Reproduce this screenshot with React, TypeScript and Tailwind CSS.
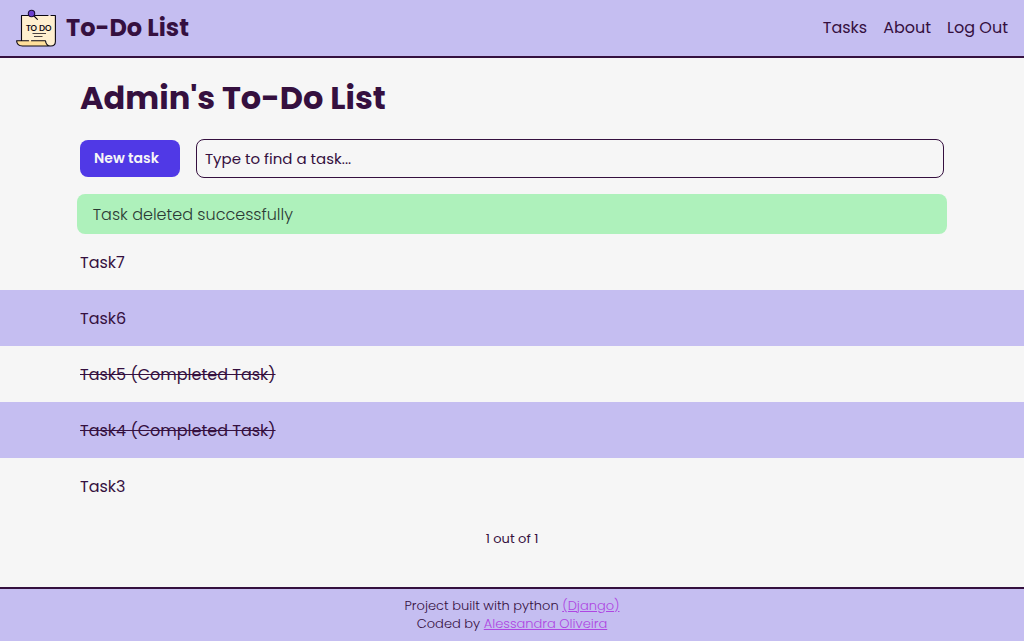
import React from "react";

type Task = { id: number; title: string; completed?: boolean };

const tasks: Task[] = [
  { id: 7, title: "Task7" },
  { id: 6, title: "Task6" },
  { id: 5, title: "Task5 (Completed Task)", completed: true },
  { id: 4, title: "Task4 (Completed Task)", completed: true },
  { id: 3, title: "Task3" },
];

const navLinks = ["Tasks", "About", "Log Out"];

function Logo() {
  return (
    <svg viewBox="0 0 40 40" className="size-10 shrink-0" aria-hidden="true">
      <path d="M5.5 7.5h34v26c0 3-2 4.500-4.500 4.500-3 0-4.500-2-5-5H5.500z" fill="#ffefcf" />
      <path d="M.6 32.800h29c.3 3.200 2 5.200 5.200 5.200H6.500C3 38 .8 36 .6 32.800z" fill="#ffdf9a" />
      <path
        d="M29.500 32.800c.3 3.200 2 5.200 5.200 5.200 2.800 0 4.600-1.700 4.600-4.500v-4c-2 3-5 4-9.800 3.300z"
        fill="#ffefcf"
      />
      <g fill="none" stroke="#0b0712" strokeWidth="1.100" strokeLinecap="round" strokeLinejoin="round">
        <path d="M5.500 32.500v-25h26.500M35 7.500h4.400v26c0 2.800-1.800 4.500-4.600 4.500H6.500C3 38 .8 36 .6 32.800h12M15.500 32.800h14c.3 3.200 2 5.200 5.200 5.200" />
        <path d="M18 8l3.400 3.400" />
      </g>
      <circle cx="15.500" cy="5.500" r="3.200" fill="#6a3fd0" stroke="#1a0b38" strokeWidth="1.100" />
      <text
        x="22.800"
        y="23"
        textAnchor="middle"
        fill="#0b0712"
        className="font-['Lato',sans-serif] text-[8px] font-bold"
      >
        TO DO
      </text>
      <path d="M16.500 25.500h13.500M18 28.500h8.500" stroke="#4b4140" strokeWidth="1" />
    </svg>
  );
}

function Header() {
  return (
    <header className="flex h-[58px] items-center justify-between border-b-2 border-[#35103f] bg-[#c5bef1] px-4">
      <a href="#home" className="flex items-center gap-2.5">
        <Logo />
        <span className="text-2xl font-bold">To-Do List</span>
      </a>
      <nav className="flex gap-4 text-base">
        {navLinks.map((label) => (
          <a key={label} href={"#" + label.toLowerCase().replace(" ", "-")}>
            {label}
          </a>
        ))}
      </nav>
    </header>
  );
}

export default function App() {
  return (
    <div className="flex min-h-screen flex-col bg-[#f6f6f6] font-['Poppins','Inter',sans-serif] text-[#35103f]">
      <Header />
      <main className="flex grow flex-col">
        <div className="px-20 pt-4">
          <h1 className="text-[32px] leading-[48px] font-bold">Admin's To-Do List</h1>
          <div className="flex items-center gap-4 pt-[17px] pb-4">
            <button
              type="button"
              className="w-[100px] rounded-lg bg-[#5039e6] px-3.5 py-2 text-left text-sm leading-[21px] font-semibold whitespace-nowrap text-[#f6f6f6]"
            >
              New task
            </button>
            <input
              type="search"
              aria-label="Find a task"
              placeholder="Type to find a task..."
              className="h-[39px] min-w-0 grow rounded-lg border border-[#35103f] px-2 text-[15px] placeholder:text-[#35103f] placeholder:opacity-100"
            />
          </div>
        </div>
        <p
          role="status"
          className="mx-auto w-[85%] rounded-lg bg-[#aef1bb] px-4 pt-[9px] pb-[7px] text-base leading-6 font-light text-[#2b3a35]"
        >
          Task deleted successfully
        </p>
        <ul>
          {tasks.map((task) => (
            <li key={task.id} className="px-20 pt-[17px] pb-[15px] text-base leading-6 even:bg-[#c5bef1]">
              <a href={"#task-" + task.id} className={task.completed ? "line-through" : ""}>
                {task.title}
              </a>
            </li>
          ))}
        </ul>
        <p className="pt-[15px] text-center text-[13px] leading-5">1 out of 1</p>
      </main>
      <footer className="border-t-2 border-[#35103f] bg-[#c5bef1] py-2 text-center text-[13px] leading-[18px] font-light">
        <p>
          Project built with python{" "}
          <a href="#django" className="text-[#ae46e2] underline">
            (Django)
          </a>
        </p>
        <p>
          Coded by{" "}
          <a href="#author" className="text-[#ae46e2] underline">
            Alessandra Oliveira
          </a>
        </p>
      </footer>
    </div>
  );
}
